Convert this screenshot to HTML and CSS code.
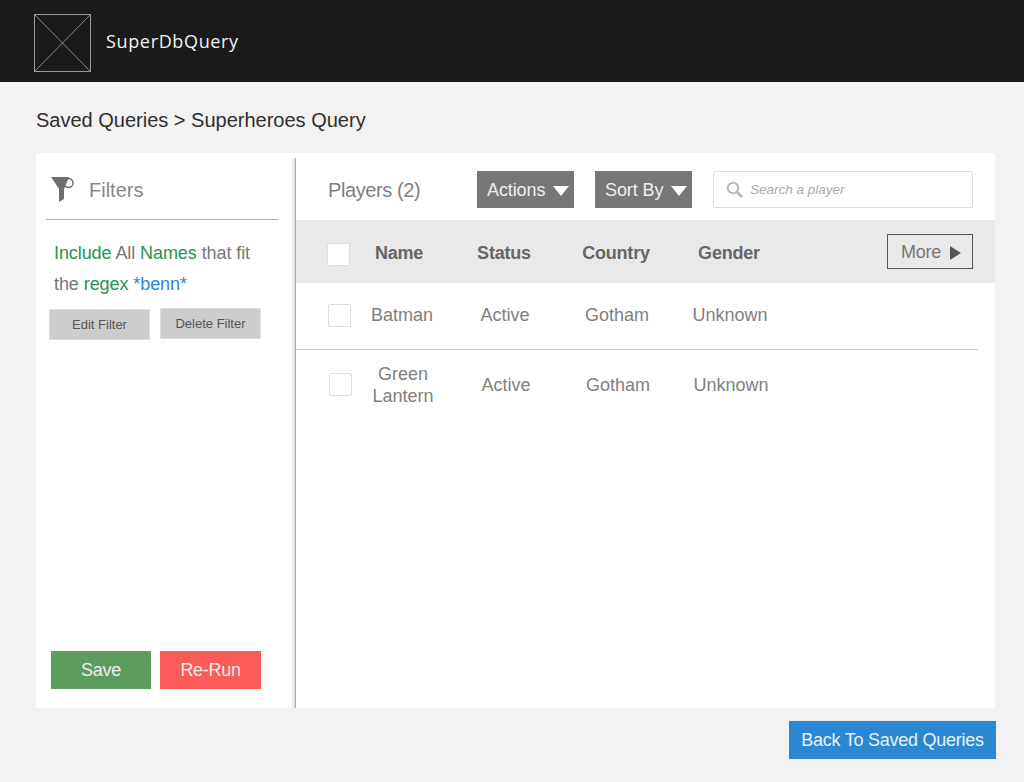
FILE: index.html
```html
<!DOCTYPE html>
<html lang="en">
<head>
  <meta charset="UTF-8">
  <title>SuperDbQuery</title>
  <link rel="stylesheet" href="styles.css">
</head>
<body>
  <header class="topbar">
    <svg class="logo" width="57" height="58" viewBox="0 0 57 58">
      <rect x="0.5" y="0.5" width="56" height="57" fill="none" stroke="#9a9a9a"/>
      <path d="M0.500 0.500L56.500 57.500M56.500 0.500L0.500 57.500" stroke="#8a8a8a" fill="none"/>
    </svg>
    <span class="brand">SuperDbQuery</span>
  </header>

  <h1 class="crumbs">Saved Queries &gt; Superheroes Query</h1>

  <div class="card">
    <aside class="sidebar">
      <div class="filters-head">
        <svg class="funnel" width="24" height="27" viewBox="0 0 24 27">
          <circle cx="18.500" cy="7" r="4.500" fill="none" stroke="#6e6e6e" stroke-width="1.500"/>
          <path d="M1 1H19L14 13V23L9 26V13Z" fill="#6e6e6e"/>
        </svg>
        <span class="filters-label">Filters</span>
      </div>
      <p class="rule">
        <span class="green">Include</span> All <span class="green">Names</span> that fit
        the <span class="green">regex</span> <span class="blue">*benn*</span>
      </p>
      <div class="filter-btns">
        <button class="btn-small btn-edit">Edit Filter</button>
        <button class="btn-small">Delete Filter</button>
      </div>
      <div class="side-actions">
        <button class="btn-big btn-save">Save</button>
        <button class="btn-big btn-run">Re-Run</button>
      </div>
    </aside>

    <main class="players">
      <div class="toolbar">
        <span class="players-title">Players (2)</span>
        <button class="btn-drop btn-actions">Actions <i class="tri-down"></i></button>
        <button class="btn-drop btn-sort">Sort By <i class="tri-down"></i></button>
        <div class="search">
          <svg width="18" height="18" viewBox="0 0 18 18">
            <circle cx="7" cy="7" r="5.200" fill="none" stroke="#b8b8b8" stroke-width="2"/>
            <path d="M11 11L16 16" stroke="#b8b8b8" stroke-width="2.600"/>
          </svg>
          <span class="search-text">Search a player</span>
        </div>
      </div>

      <div class="row row-head">
        <span class="check"></span>
        <span class="head-cell cell-name">Name</span>
        <span class="head-cell">Status</span>
        <span class="head-cell">Country</span>
        <span class="head-cell">Gender</span>
        <button class="btn-more">More <i class="tri-right"></i></button>
      </div>
      <div class="row row-one">
        <span class="check"></span>
        <span>Batman</span>
        <span>Active</span>
        <span>Gotham</span>
        <span>Unknown</span>
      </div>
      <div class="row row-two">
        <span class="check"></span>
        <span>Green Lantern</span>
        <span>Active</span>
        <span>Gotham</span>
        <span>Unknown</span>
      </div>
    </main>
  </div>

  <div class="footer">
    <button class="btn-back">Back To Saved Queries</button>
  </div>
</body>
</html>
```

FILE: styles.css
```css
body {
  margin: 0;
  height: 782px;
  overflow: hidden;
  background-color: #f2f2f2;
  font-family: "Liberation Sans", Arial, sans-serif;
  color: #666;
}
button {
  font-family: inherit;
  cursor: pointer;
}
.topbar {
  height: 82px;
  box-sizing: border-box;
  background-color: #1a1a1a;
  padding-left: 34px;
  display: flex;
  align-items: center;
}
.logo {
  margin: 4px 15px 0 0;
}
.brand {
  font-family: "Open Sans", sans-serif;
  font-size: 18px;
  letter-spacing: 0.65px;
  color: #f2f2f2;
}
.crumbs {
  margin: 0;
  height: 71px;
  line-height: 76px;
  padding-left: 36px;
  font-size: 20px;
  font-weight: normal;
  color: #2e2e2e;
}
.card {
  margin-left: 36px;
  width: 959px;
  height: 555px;
  background-color: #fff;
  display: flex;
}
.sidebar {
  width: 259px;
  box-sizing: border-box;
  padding: 0 17px 19px 10px;
  display: flex;
  flex-direction: column;
  background: linear-gradient(to right, rgba(0, 0, 0, 0), rgba(0, 0, 0, 0.14)) right bottom / 4px calc(100% - 5px) no-repeat;
}
.filters-head {
  height: 67px;
  box-sizing: border-box;
  border-bottom: 1px solid #aaa;
  padding: 7px 0 0 4px;
  display: flex;
  align-items: center;
  font-size: 20px;
  color: #888;
}
.filters-label {
  padding-top: 2px;
}
.funnel {
  margin-right: 15px;
}
.rule {
  margin: 18px 0 0 8px;
  font-size: 18px;
  line-height: 31px;
  letter-spacing: -0.08px;
  color: #777;
}
.green {
  color: #27924f;
}
.blue {
  color: #2a87d3;
}
.filter-btns {
  display: flex;
  align-items: flex-start;
  gap: 10px;
  margin: 8px 0 0 3px;
}
.btn-small {
  width: 101px;
  height: 31px;
  background-color: #cdcdcd;
  border: 1px solid #dedede;
  color: #555;
  font-size: 13px;
  padding: 0;
}
.btn-edit {
  margin-top: 1px;
}
.side-actions {
  margin: auto 0 0 5px;
  display: flex;
  gap: 9px;
}
.btn-big {
  width: 101px;
  height: 38px;
  border: 0;
  padding: 0;
  font-size: 18px;
  letter-spacing: -0.3px;
  color: #eee;
}
.btn-save {
  width: 100px;
  background-color: #5c9d5e;
}
.btn-run {
  background-color: #fb5c58;
}
.players {
  flex: 1;
  border-left: 1px solid #aaa;
  margin-top: 5px;
}
.toolbar {
  height: 62px;
  box-sizing: border-box;
  padding: 13px 0 0 32px;
  display: flex;
  align-items: flex-start;
}
.players-title {
  width: 149px;
  padding-top: 1px;
  font-size: 20px;
  line-height: 37px;
  letter-spacing: -0.4px;
  color: #808080;
}
.btn-drop {
  height: 37px;
  width: 97px;
  background-color: #777;
  border: 0;
  padding: 2px 0 0 10px;
  font-size: 18px;
  letter-spacing: -0.1px;
  color: #eee;
  display: flex;
  align-items: center;
  gap: 8px;
}
.btn-sort {
  margin-left: 21px;
}
.tri-down {
  border-left: 8px solid transparent;
  border-right: 8px solid transparent;
  border-top: 10px solid #fff;
}
.tri-right {
  border-top: 7px solid transparent;
  border-bottom: 7px solid transparent;
  border-left: 11px solid #555;
}
.search {
  margin-left: 21px;
  width: 260px;
  height: 37px;
  box-sizing: border-box;
  background-color: #fff;
  border: 1px solid #ddd;
  border-radius: 2px;
  padding-left: 12px;
  display: flex;
  align-items: center;
  gap: 6px;
  font-size: 13.500px;
  font-style: italic;
  color: #aaa;
}
.search-text {
  padding-bottom: 1px;
}
.row {
  display: grid;
  grid-template-columns: 23px 102px 104px 120px 106px 1fr;
  align-items: center;
  text-align: center;
  font-size: 18px;
  line-height: 22px;
  color: #808080;
}
.check {
  width: 23px;
  height: 23px;
  box-sizing: border-box;
  background-color: #fff;
  border: 1px solid #ddd;
  border-radius: 2px;
}
.row-head {
  height: 63px;
  padding-left: 31px;
  background-color: #e9e9e9;
  font-weight: bold;
  color: #666;
}
.row-head .check {
  margin-top: 6px;
}
.head-cell {
  padding-top: 2px;
  letter-spacing: -0.2px;
}
.cell-name {
  padding-right: 4px;
}
.btn-more {
  justify-self: end;
  margin-right: 22px;
  width: 86px;
  height: 35px;
  background-color: transparent;
  border: 1px solid #555;
  padding: 2px 0 0 2px;
  font-size: 18px;
  letter-spacing: -0.2px;
  color: #777;
  display: flex;
  align-items: center;
  justify-content: center;
  gap: 9px;
}
.row-one {
  height: 67px;
  box-sizing: border-box;
  margin-right: 17px;
  padding: 0 0 2px 32px;
  border-bottom: 1px solid #c8c8c8;
}
.row-two {
  height: 69px;
  padding-left: 33px;
}
.footer {
  display: flex;
  justify-content: flex-end;
  padding: 13px 28px 0 0;
}
.btn-back {
  width: 207px;
  height: 38px;
  background-color: #2b87d1;
  border: 0;
  padding: 0;
  font-size: 18px;
  letter-spacing: -0.25px;
  color: #e6f1fa;
}
```
